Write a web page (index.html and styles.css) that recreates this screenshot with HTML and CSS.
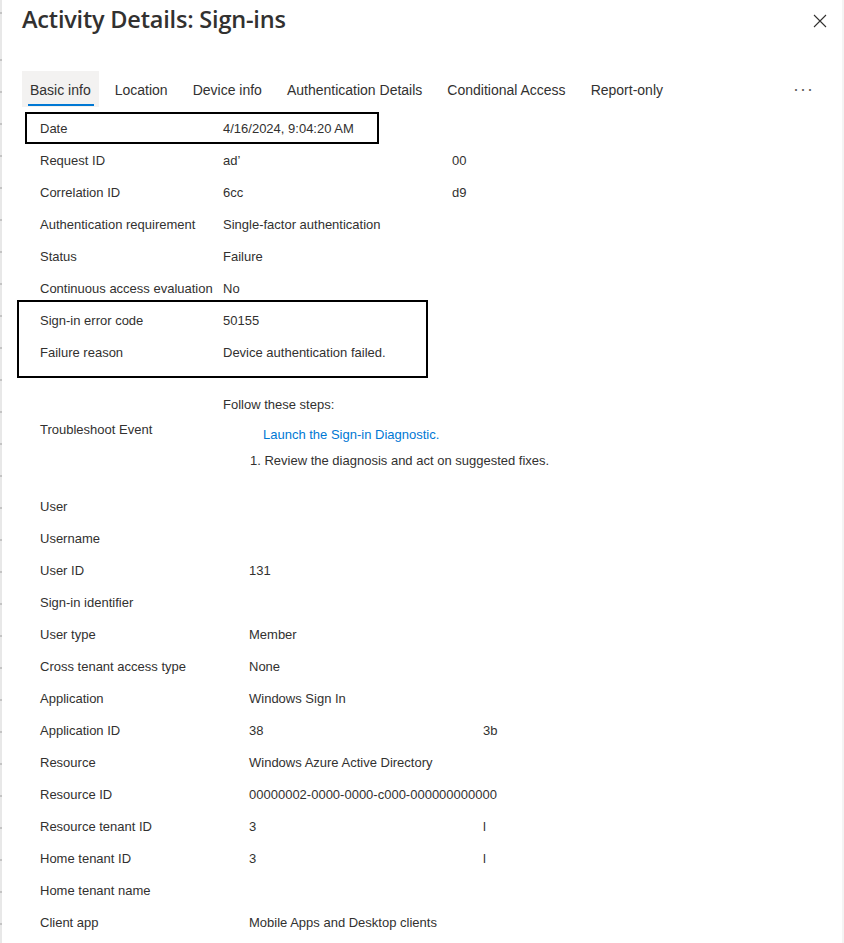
FILE: index.html
```html
<!DOCTYPE html>
<html lang="en">
<head>
    <meta charset="UTF-8">
    <meta name="viewport" content="width=device-width, initial-scale=1.0">
    <title>Activity Details: Sign-ins</title>
    <link rel="stylesheet" href="styles.css">
</head>
<body>
    <div class="blade-edge"></div>

    <div class="panel">
        <header class="panel-header">
            <h1>Activity Details: Sign-ins</h1>
            <button class="close-btn" aria-label="Close">
                <svg width="14" height="14" viewBox="0 0 14 14"><path d="M1 1L13 13M13 1L1 13" stroke="#323130" stroke-width="1.1" fill="none"/></svg>
            </button>
        </header>

        <nav class="tabs">
            <div class="tab active">Basic info</div>
            <div class="tab">Location</div>
            <div class="tab">Device info</div>
            <div class="tab">Authentication Details</div>
            <div class="tab">Conditional Access</div>
            <div class="tab">Report-only</div>
            <div class="tab-more">&middot;&middot;&middot;</div>
        </nav>

        <section class="details">
            <div class="mark mark-date">
                <div class="row"><span class="label">Date</span><span class="value">4/16/2024, 9:04:20 AM</span></div>
            </div>
            <div class="row"><span class="label">Request ID</span><span class="value"><span class="cut">ad&rsquo;</span>00</span></div>
            <div class="row"><span class="label">Correlation ID</span><span class="value"><span class="cut">6cc</span>d9</span></div>
            <div class="row"><span class="label">Authentication requirement</span><span class="value">Single-factor authentication</span></div>
            <div class="row"><span class="label">Status</span><span class="value">Failure</span></div>
            <div class="row"><span class="label">Continuous access evaluation</span><span class="value">No</span></div>
            <div class="mark mark-error">
                <div class="row"><span class="label">Sign-in error code</span><span class="value">50155</span></div>
                <div class="row"><span class="label">Failure reason</span><span class="value">Device authentication failed.</span></div>
            </div>

            <div class="troubleshoot">
                <span class="label">Troubleshoot Event</span>
                <div class="steps">
                    <div>Follow these steps:</div>
                    <a class="diag-link" href="#">Launch the Sign-in Diagnostic.</a>
                    <div class="step">1. Review the diagnosis and act on suggested fixes.</div>
                </div>
            </div>
        </section>

        <section class="details wide">
            <div class="row"><span class="label">User</span><span class="value"></span></div>
            <div class="row"><span class="label">Username</span><span class="value"></span></div>
            <div class="row"><span class="label">User ID</span><span class="value">131</span></div>
            <div class="row"><span class="label">Sign-in identifier</span><span class="value"></span></div>
            <div class="row"><span class="label">User type</span><span class="value">Member</span></div>
            <div class="row"><span class="label">Cross tenant access type</span><span class="value">None</span></div>
            <div class="row"><span class="label">Application</span><span class="value">Windows Sign In</span></div>
            <div class="row"><span class="label">Application ID</span><span class="value"><span class="cut">38</span>3b</span></div>
            <div class="row"><span class="label">Resource</span><span class="value">Windows Azure Active Directory</span></div>
            <div class="row"><span class="label">Resource ID</span><span class="value">00000002-0000-0000-c000-000000000000</span></div>
            <div class="row"><span class="label">Resource tenant ID</span><span class="value"><span class="cut">3</span>l</span></div>
            <div class="row"><span class="label">Home tenant ID</span><span class="value"><span class="cut">3</span>l</span></div>
            <div class="row"><span class="label">Home tenant name</span><span class="value"></span></div>
            <div class="row"><span class="label">Client app</span><span class="value">Mobile Apps and Desktop clients</span></div>
        </section>
    </div>
</body>
</html>
```

FILE: styles.css
```css
body {
    margin: 0;
    padding: 0;
    background-color: white;
    font-family: "Segoe UI", "Liberation Sans", Arial, sans-serif;
    color: #323130;
    display: flex;
    min-height: 943px;
    overflow: hidden;
}
.blade-edge {
    width: 2px;
    flex-shrink: 0;
    background: repeating-linear-gradient(to bottom, #e8e8e8 0, #e8e8e8 30px, #c4c4c4 30px, #c4c4c4 32px);
    background-position: 0 29px;
}
.panel {
    flex: 1;
    padding: 0 0 0 20px;
    border-right: 2px solid #f4f4f4;
}
.panel-header {
    display: flex;
    justify-content: space-between;
    align-items: flex-start;
    height: 71px;
}
.panel-header h1 {
    margin: 3px 0 0;
    font-family: "Open Sans", sans-serif;
    font-weight: 600;
    font-size: 23.5px;
    letter-spacing: -0.2px;
    color: #323130;
}
.close-btn {
    background: none;
    border: none;
    padding: 0;
    margin: 14px 15px 0 0;
    width: 14px;
    height: 14px;
    cursor: pointer;
}
.close-btn svg {
    display: block;
}
.tabs {
    display: flex;
    align-items: stretch;
    gap: 9px;
    height: 36px;
    font-size: 14px;
}
.tab {
    padding: 2px 8px 0;
    display: flex;
    align-items: center;
    position: relative;
    white-space: nowrap;
    color: #323130;
}
.tab.active {
    background-color: #f3f2f1;
    margin-right: -1px;
}
.tab.active::after {
    content: "";
    position: absolute;
    left: 6px;
    right: 5px;
    bottom: 1px;
    height: 2px;
    background-color: #0078d4;
}
.tab-more {
    margin-left: auto;
    margin-right: 28px;
    display: flex;
    align-items: center;
    font-size: 18px;
    letter-spacing: 1px;
    color: #605e5c;
}
.details {
    padding-left: 18px;
    font-size: 13px;
    margin-top: 5px;
}
.row {
    display: grid;
    grid-template-columns: 183px auto;
    height: 32px;
    align-items: center;
    white-space: nowrap;
}
.wide {
    margin-top: 20px;
}
.wide .row {
    grid-template-columns: 209px auto;
}
.cut {
    display: inline-block;
    width: 229px;
}
.wide .cut {
    width: 234px;
}
.mark {
    border: 2px solid #000;
    box-sizing: border-box;
}
.mark-date {
    margin-left: -15px;
    padding-left: 13px;
    width: 354px;
    height: 32px;
    margin-top: 1px;
}
.mark-date .row {
    height: 28px;
}
.mark-error {
    margin-left: -23px;
    padding: 2px 0 8px 21px;
    width: 411px;
    margin-top: -4px;
}
.troubleshoot {
    display: grid;
    grid-template-columns: 183px auto;
    align-items: center;
    margin-top: 18px;
}
.troubleshoot .label {
    padding-bottom: 8px;
}
.steps {
    line-height: 18px;
}
.diag-link {
    display: block;
    margin: 12px 0 0 40px;
    color: #0078d4;
    text-decoration: none;
}
.step {
    margin: 8px 0 0 27px;
}
```
